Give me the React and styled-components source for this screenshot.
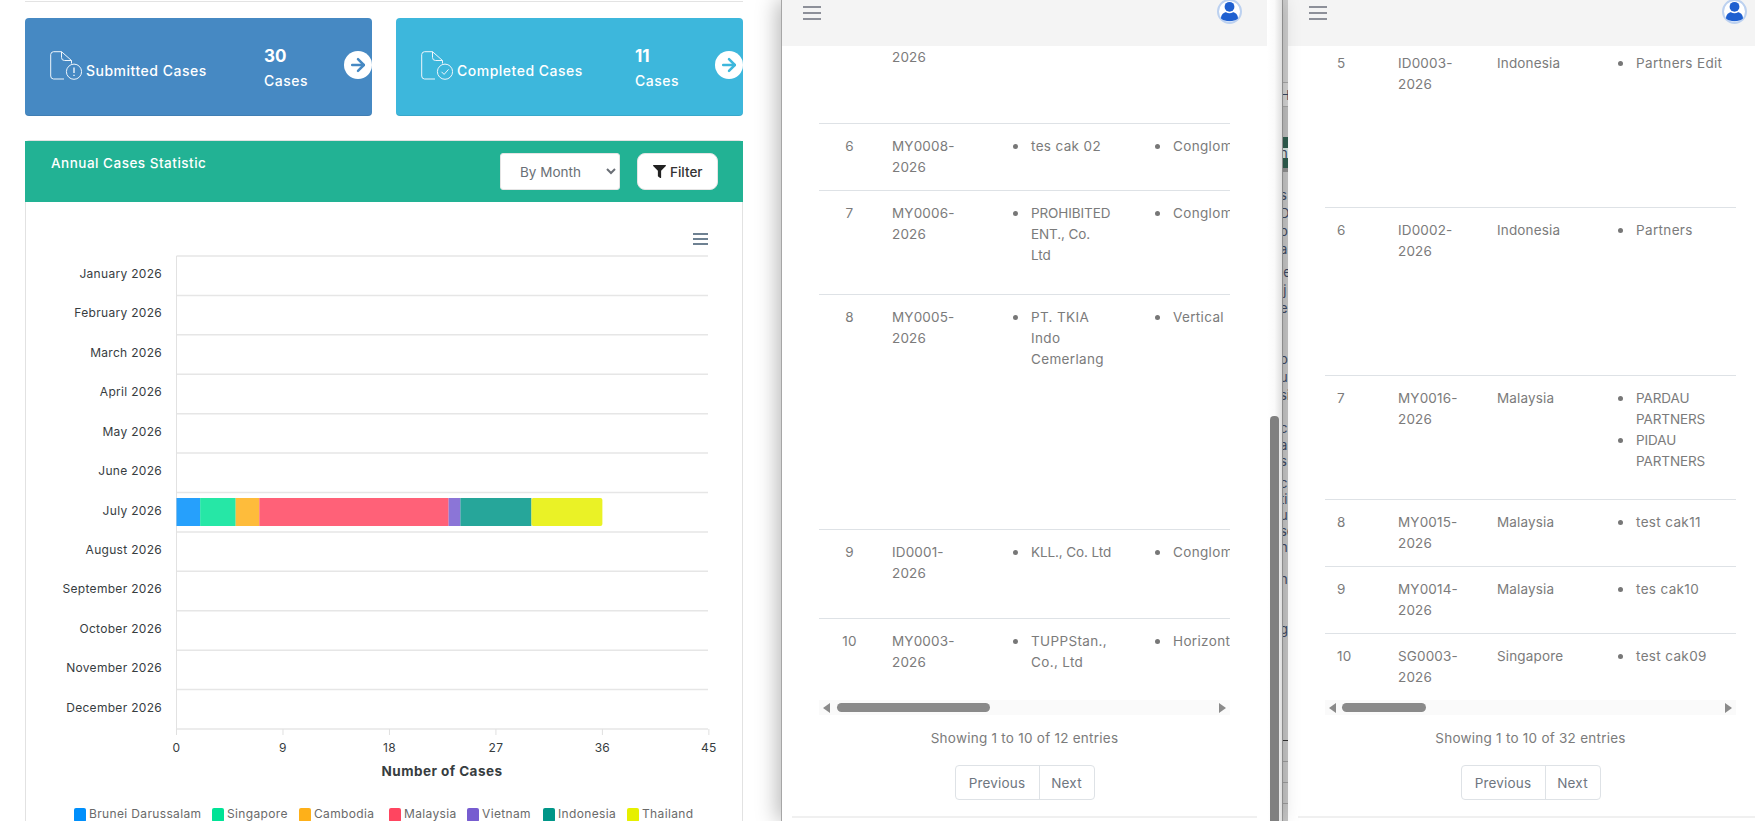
import React from "react";
import styled, { createGlobalStyle } from "styled-components";
import { ArrowRight } from "lucide-react";
import { FaFilter } from "react-icons/fa";

const GlobalStyle = createGlobalStyle`
  html, body {
    margin: 0;
    padding: 0;
    background: #fff;
    overflow: hidden;
  }
  * {
    box-sizing: border-box;
  }
  body {
    font-family: Inter, "Noto Sans", sans-serif;
  }
`;

const Page = styled.div`
  display: flex;
  width: 1755px;
  height: 821px;
  overflow: hidden;
`;

const LeftPane = styled.section`
  flex: 0 0 781px;
  padding: 1px 38px 0 25px;
`;

const Rule = styled.div`
  height: 1px;
  background: #e3e3e3;
`;

const CardRow = styled.div`
  display: grid;
  grid-template-columns: 347px 347px;
  gap: 24px;
  margin-top: 16px;
`;

const Card = styled.div`
  display: flex;
  align-items: center;
  height: 98px;
  padding: 0 0 4px 25px;
  border-radius: 4px;
  overflow: hidden;
  color: #fff;
  background: ${(p) => p.$bg};
  box-shadow: inset 0 -1px 0 rgba(0, 0, 0, 0.08);
`;

const CardLabel = styled.div`
  flex: 0 0 214px;
  display: flex;
  align-items: flex-end;
  gap: 4px;
  font-size: 14px;
  font-weight: 500;
  letter-spacing: 0.5px;
  line-height: 18px;
`;

const CardStats = styled.div`
  flex: 0 0 80px;
  display: flex;
  flex-direction: column;
  gap: 7px;
  font-size: 14px;
  font-weight: 500;
  letter-spacing: 0.5px;
  line-height: 18px;
  padding-top: 6px;
`;

const CardCount = styled.div`
  font-size: 17px;
  font-weight: 700;
  letter-spacing: 0;
`;

const CardArrow = styled.div`
  flex: 0 0 28px;
  height: 28px;
  border-radius: 50%;
  background: #fff;
  display: flex;
  align-items: center;
  justify-content: center;
  color: ${(p) => p.$color};
`;

const ChartCard = styled.div`
  margin-top: 24px;
  border: 1px solid #e2e2e2;
  border-radius: 4px;
  height: 700px;
`;

const ChartHeader = styled.div`
  display: flex;
  align-items: flex-start;
  height: 61px;
  margin: 0 -1px;
  padding: 12px 25px 0 26px;
  background: #22b294;
  color: #fff;
`;

const ChartTitle = styled.div`
  flex: 1;
  font-size: 13.5px;
  font-weight: 500;
  letter-spacing: 0.5px;
  line-height: 20px;
`;

const MonthSelect = styled.select`
  width: 120px;
  height: 37px;
  margin-right: 17px;
  padding: 0 8px 0 15px;
  border: 1px solid #e4e4e4;
  border-radius: 3px;
  background: #fff;
  color: #6a6f76;
  font-family: inherit;
  font-size: 13.5px;
`;

const FilterButton = styled.button`
  display: flex;
  align-items: center;
  gap: 4px;
  width: 81px;
  height: 37px;
  padding: 0 0 0 15px;
  border: 1px solid #e4e4e4;
  border-radius: 8px;
  background: #fff;
  color: #333;
  font-family: inherit;
  font-size: 13.5px;
  font-weight: 500;
`;

const ChartSvg = styled.svg`
  display: block;
`;

const AxisLabel = styled.text`
  font-family: Inter, sans-serif;
  font-size: 12px;
  letter-spacing: 0.3px;
  fill: #373d3f;
`;

const AxisTitle = styled.text`
  font-family: Inter, sans-serif;
  font-size: 13.5px;
  font-weight: 700;
  letter-spacing: 0.45px;
  fill: #373d3f;
`;

const LegendText = styled.text`
  font-family: Inter, sans-serif;
  font-size: 12px;
  letter-spacing: 0.35px;
  fill: #6a6a6a;
`;

const Window = styled.section`
  flex: 0 0 ${(p) => p.$width}px;
  min-width: 0;
  display: flex;
  flex-direction: column;
  border-left: ${(p) => (p.$edge ? "1px solid #a6a6a6" : "0")};
  background: #fff;
`;

const WindowFrame = styled.div`
  flex: 0 0 501px;
  display: flex;
  position: relative;
  box-shadow: -4px 0 20px rgba(0, 0, 0, 0.28);
`;

const Gutter = styled.div`
  flex: 0 0 15px;
  padding: 416px 3px 0;
  background: linear-gradient(to right, #fff 0%, #fafafa 50%, #dedede 100%);
`;

const GutterThumb = styled.div`
  height: 100%;
  border-radius: 4px 4px 0 0;
  background: #808080;
`;

const Strip = styled.div`
  flex: 0 0 6px;
  overflow: hidden;
  border-left: 1px solid #9b9b9b;
  background: #c4c4c4;
`;

const StripRow = styled.div`
  height: ${(p) => p.$h}px;
  background: ${(p) => p.$bg || "transparent"};
  border-bottom: ${(p) => (p.$line ? `1px solid ${p.$line}` : "0")};
  color: #3d4760;
  font-size: 13px;
  line-height: ${(p) => p.$h}px;
  white-space: nowrap;
  text-indent: -3px;
`;

const TopBar = styled.header`
  flex: 0 0 46px;
  display: flex;
  justify-content: space-between;
  align-items: flex-start;
  padding: 0 ${(p) => p.$right}px 0 21px;
  background: #f4f4f4;
`;

const Burger = styled.div`
  display: flex;
  flex-direction: column;
  gap: 4px;
  width: 18px;
  margin-top: 6px;

  & span {
    height: 2px;
    background: #8d9099;
  }
`;

const TableArea = styled.div`
  flex: 0 0 654px;
  margin-left: 37px;
  width: 411px;
  overflow: hidden;
`;

const Table = styled.table`
  table-layout: fixed;
  border-collapse: separate;
  border-spacing: 0;
  width: ${(p) => p.$width}px;
  margin-top: ${(p) => p.$offset}px;
  color: #7b7b7b;
  font-size: 13.5px;
  letter-spacing: 0.15px;
  line-height: 21px;
`;

const Row = styled.tr`
  height: ${(p) => p.$h}px;

  & td {
    height: ${(p) => p.$h}px;
    padding: 12px;
    vertical-align: top;
    border-top: ${(p) => (p.$first ? "0" : "1px solid #dee2e6")};
    white-space: pre;
  }
`;

const NoCell = styled.td`
  text-align: ${(p) => p.$align};
`;

const Bullets = styled.ul`
  margin: 0;
  padding: 0 0 0 32px;
  list-style: none;
  letter-spacing: ${(p) => (p.$caps ? "-0.1px" : "0.35px")};

  & li {
    position: relative;
  }
  & li::before {
    content: "";
    position: absolute;
    left: -18px;
    top: 8px;
    width: 5px;
    height: 5px;
    border-radius: 50%;
    background: #777;
  }
`;

const ScrollTrack = styled.div`
  flex: 0 0 15px;
  display: flex;
  align-items: center;
  width: 411px;
  margin-left: 37px;
  padding: 0 4px;
  background: #fafafa;
`;

const TrackArrow = styled.span`
  width: 0;
  height: 0;
  border-top: 5px solid transparent;
  border-bottom: 5px solid transparent;
  ${(p) => (p.$right ? "border-left" : "border-right")}: 7px solid #8a8a8a;
`;

const TrackThumb = styled.div`
  width: ${(p) => p.$width}px;
  height: 9px;
  margin-left: ${(p) => p.$gap}px;
  margin-right: auto;
  border-radius: 5px;
  background: #8a8a8a;
`;

const Footer = styled.div`
  width: 411px;
  margin-left: 37px;
  display: flex;
  flex-direction: column;
  align-items: center;
`;

const Showing = styled.div`
  margin-top: 13px;
  color: #7b7b7b;
  font-size: 13.5px;
  letter-spacing: 0.25px;
  line-height: 21px;
`;

const Pager = styled.div`
  display: flex;
  height: 35px;
  margin-top: 16px;
  border: 1px solid #dee2e6;
  border-radius: 4px;
  color: #6f7680;
  font-size: 13.5px;
  letter-spacing: 0.2px;
`;

const PagerButton = styled.div`
  display: flex;
  align-items: center;
  justify-content: center;
  width: ${(p) => p.$width}px;
  border-left: ${(p) => (p.$divide ? "1px solid #dee2e6" : "0")};
`;

const BottomRule = styled.div`
  flex: 0 0 2px;
  margin: 16px ${(p) => p.$right}px 0 10px;
  background: #f0f0f0;
`;

const FileIcon = ({ check }) => (
  <svg width="32" height="29" viewBox="0 0 32 29" fill="none" stroke="#eef5fb" strokeWidth="1">
    <path d="M14 28H3.500A3 3 0 0 1 .7 25V3.500A3 3 0 0 1 3.500.7H11.500L21.500 9.500V12.500" />
    <path d="M11.500.7V6.500A3 3 0 0 0 14.500 9.500H21.500" />
    <circle cx="24" cy="20.7" r="7.6" />
    {check ? (
      <path d="M20.500 20.800l2.600 2.600 4.400-5" />
    ) : (
      <path d="M24 16.500v5.600M24 23.700v1.300" strokeWidth="1.4" />
    )}
  </svg>
);

const Avatar = () => (
  <svg width="25" height="25" viewBox="0 0 25 25" style={{ marginTop: -1 }}>
    <circle cx="12.5" cy="12.5" r="11.5" fill="#fff" stroke="#bcd1f0" strokeWidth="2" />
    <circle cx="12.5" cy="7.8" r="4.9" fill="#1f60d0" />
    <path d="M4 19.500c0-4 3-6.200 5-6.200 1 .6 2.200.9 3.500.9s2.500-.3 3.500-.9c2 0 5 2.200 5 6.200-2 1.800-5 2.700-8.500 2.700S6 21.300 4 19.500z" fill="#1f60d0" />
  </svg>
);

const months = [
  "January 2026", "February 2026", "March 2026", "April 2026", "May 2026", "June 2026",
  "July 2026", "August 2026", "September 2026", "October 2026", "November 2026", "December 2026",
];

const series = [
  { name: "Brunei Darussalam", color: "#008FFB", n: 2, mark: 74 },
  { name: "Singapore", color: "#00E396", n: 3, mark: 212 },
  { name: "Cambodia", color: "#FEB019", n: 2, mark: 299 },
  { name: "Malaysia", color: "#FF4560", n: 16, mark: 389 },
  { name: "Vietnam", color: "#775DD0", n: 1, mark: 467 },
  { name: "Indonesia", color: "#009688", n: 6, mark: 543 },
  { name: "Thailand", color: "#E6F000", n: 6, mark: 627 },
];

const plotLeft = 176.5;
const plotRight = 708;
const plotTop = 256;
const rowH = 39.42;
const unit = 11.83;

const Chart = () => {
  let used = 0;
  return (
    <ChartSvg width="716" height="620" viewBox="26 202 716 620">
      <g stroke="#6e8192" strokeWidth="2">
        <path d="M693 234h15M693 239h15M693 244h15" />
      </g>
      {months.map((m, i) => (
        <path key={m} d={`M${plotLeft} ${plotTop + i * rowH}H${plotRight}`} stroke="#e6e6e6" strokeWidth="1.5" />
      ))}
      <path d={`M${plotLeft} ${plotTop + 12 * rowH}H${plotRight}`} stroke="#e6e6e6" strokeWidth="1.5" />
      <path d={`M${plotLeft} ${plotTop}V${plotTop + 12 * rowH}`} stroke="#e2e2e2" strokeWidth="1" />
      {months.map((m, i) => (
        <AxisLabel key={m} x="162" y={plotTop + i * rowH + 22} textAnchor="end">
          {m}
        </AxisLabel>
      ))}
      {series.map((s, i) => {
        const x = plotLeft + used * unit;
        used += s.n;
        return (
          <rect key={s.name} x={x} y="498" width={s.n * unit} height="28" fill={s.color} fillOpacity="0.85" rx={i === 6 ? 2 : 0} />
        );
      })}
      {[0, 9, 18, 27, 36, 45].map((t) => {
        const x = plotLeft + t * unit;
        return (
          <g key={t}>
            <path d={`M${x} 729v6`} stroke="#e0e0e0" />
            <AxisLabel x={x} y="752" textAnchor="middle">
              {t}
            </AxisLabel>
          </g>
        );
      })}
      <AxisTitle x="442" y="776" textAnchor="middle">
        Number of Cases
      </AxisTitle>
      {series.map((s) => (
        <g key={s.name}>
          <rect x={s.mark} y="808" width="12" height="14" rx="2" fill={s.color} />
          <LegendText x={s.mark + 15} y="818">
            {s.name}
          </LegendText>
        </g>
      ))}
    </ChartSvg>
  );
};

// sliver of the page behind the two windows
const stripRows = [
  { h: 83, line: "#a5a5a5", bg: "#cdcdcd" },
  { h: 24, t: "H", line: "#a5a5a5", bg: "#d2d2d2" },
  { h: 30, bg: "#bdbdbd" },
  { h: 11, bg: "#2f5d4e" },
  { h: 10, bg: "#d8e6e0", t: "n" },
  { h: 10, bg: "#2f5d4e" },
  { h: 4, bg: "#8f8f8f" },
  { h: 14 },
  { h: 18, t: "s" }, { h: 18, t: "D" }, { h: 18, t: "or" }, { h: 18, t: "a" },
  { h: 5 },
  { h: 18, t: "je" }, { h: 18, t: "ij" }, { h: 18, t: "er" },
  { h: 33 },
  { h: 18, t: "oc" }, { h: 18, t: "ul" }, { h: 18, t: "si" },
  { h: 15 },
  { h: 18, t: "c" }, { h: 16, t: "a" }, { h: 16, t: "s" },
  { h: 6 },
  { h: 16, t: "c" }, { h: 16, t: "ti" }, { h: 16, t: "u" }, { h: 16, t: "se" }, { h: 16, t: "n" }, { h: 16, t: "l" }, { h: 16, t: "n" },
  { h: 33 },
  { h: 18, t: "ge" }, { h: 18, t: "," },
  { h: 85, line: "#333" },
  { h: 21, line: "#9b9b9b" }, { h: 21, line: "#9b9b9b" }, { h: 21, line: "#9b9b9b" }, { h: 17 },
];

const midRows = [
  { h: 109, no: "", code: "MY0009-\n2026", first: true },
  { h: 67, no: 6, code: "MY0008-\n2026", b1: ["tes cak 02"], b2: ["Conglomerate"] },
  { h: 104, no: 7, code: "MY0006-\n2026", b1: ["PROHIBITED\nENT., Co.\nLtd"], caps: true, b2: ["Conglomerate"] },
  { h: 235, no: 8, code: "MY0005-\n2026", b1: ["PT. TKIA\nIndo\nCemerlang"], b2: ["Vertical"] },
  { h: 89, no: 9, code: "ID0001-\n2026", b1: ["KLL., Co. Ltd"], caps: true, b2: ["Conglomerate"] },
  { h: 82, no: 10, code: "MY0003-\n2026", b1: ["TUPPStan.,\nCo., Ltd"], b2: ["Horizontal"] },
];

const sideRows = [
  { h: 166, no: 5, code: "ID0003-\n2026", country: "Indonesia", b2: ["Partners Edit"], first: true },
  { h: 168, no: 6, code: "ID0002-\n2026", country: "Indonesia", b2: ["Partners"] },
  { h: 124, no: 7, code: "MY0016-\n2026", country: "Malaysia", b2: ["PARDAU\nPARTNERS", "PIDAU\nPARTNERS"], capsTwo: true },
  { h: 67, no: 8, code: "MY0015-\n2026", country: "Malaysia", b2: ["test cak11"] },
  { h: 67, no: 9, code: "MY0014-\n2026", country: "Malaysia", b2: ["tes cak10"] },
  { h: 67, no: 10, code: "SG0003-\n2026", country: "Singapore", b2: ["test cak09"] },
];

const BulletList = ({ items, caps }) =>
  items ? (
    <Bullets $caps={caps}>
      {items.map((it) => (
        <li key={it}>{it}</li>
      ))}
    </Bullets>
  ) : null;

const TablePanel = ({ rows, cols, paneWidth, tableWidth, offset, align, total, thumb, gap, avatarRight, edge, ruleRight }) => (
  <Window $width={paneWidth} $edge={edge}>
    <TopBar $right={avatarRight}>
      <Burger>
        <span />
        <span />
        <span />
      </Burger>
      <Avatar />
    </TopBar>
    <TableArea>
      <Table $width={tableWidth} $offset={offset}>
        <colgroup>
          {cols.map((c, i) => (
            <col key={i} width={c} />
          ))}
        </colgroup>
        <tbody>
          {rows.map((r) => (
            <Row key={r.code} $h={r.h} $first={r.first}>
              <NoCell $align={align}>{r.no}</NoCell>
              <td>{r.code}</td>
              <td>{r.country || <BulletList items={r.b1} caps={r.caps} />}</td>
              <td>
                <BulletList items={r.b2} caps={r.capsTwo} />
              </td>
            </Row>
          ))}
        </tbody>
      </Table>
    </TableArea>
    <ScrollTrack>
      <TrackArrow />
      <TrackThumb $width={thumb} $gap={gap} />
      <TrackArrow $right />
    </ScrollTrack>
    <Footer>
      <Showing>Showing 1 to 10 of {total} entries</Showing>
      <Pager>
        <PagerButton $width={83}>Previous</PagerButton>
        <PagerButton $width={55} $divide>
          Next
        </PagerButton>
      </Pager>
    </Footer>
    <BottomRule $right={ruleRight} />
  </Window>
);

export default function App() {
  return (
    <Page>
      <GlobalStyle />
      <LeftPane>
        <Rule />
        <CardRow>
          <Card $bg="#4689c3">
            <CardLabel>
              <FileIcon />
              Submitted Cases
            </CardLabel>
            <CardStats>
              <CardCount>30</CardCount>
              Cases
            </CardStats>
            <CardArrow $color="#4689c3">
              <ArrowRight size={20} strokeWidth={3} />
            </CardArrow>
          </Card>
          <Card $bg="#3db7dc">
            <CardLabel>
              <FileIcon check />
              Completed Cases
            </CardLabel>
            <CardStats>
              <CardCount>11</CardCount>
              Cases
            </CardStats>
            <CardArrow $color="#3db7dc">
              <ArrowRight size={20} strokeWidth={3} />
            </CardArrow>
          </Card>
        </CardRow>
        <ChartCard>
          <ChartHeader>
            <ChartTitle>Annual Cases Statistic</ChartTitle>
            <MonthSelect defaultValue="month">
              <option value="month">By Month</option>
            </MonthSelect>
            <FilterButton>
              <FaFilter size={13} color="#222" />
              Filter
            </FilterButton>
          </ChartHeader>
          <Chart />
        </ChartCard>
      </LeftPane>
      <WindowFrame>
        <TablePanel
          rows={midRows}
          cols={[61, 107, 142, 200]}
          paneWidth={486}
          tableWidth={510}
          offset={-32}
          align="center"
          total={12}
          thumb={153}
          gap={7}
          avatarRight={25}
          edge
          ruleRight={10}
        />
        <Gutter>
          <GutterThumb />
        </Gutter>
      </WindowFrame>
      <Strip>
        {stripRows.map((r, i) => (
          <StripRow key={i} $h={r.h} $bg={r.bg} $line={r.line}>
            {r.t}
          </StripRow>
        ))}
      </Strip>
      <TablePanel
        rows={sideRows}
        cols={[61, 99, 107, 144]}
        paneWidth={467}
        tableWidth={411}
        offset={-5}
        align="left"
        total={32}
        thumb={84}
        gap={6}
        avatarRight={8}
        ruleRight={0}
      />
    </Page>
  );
}
